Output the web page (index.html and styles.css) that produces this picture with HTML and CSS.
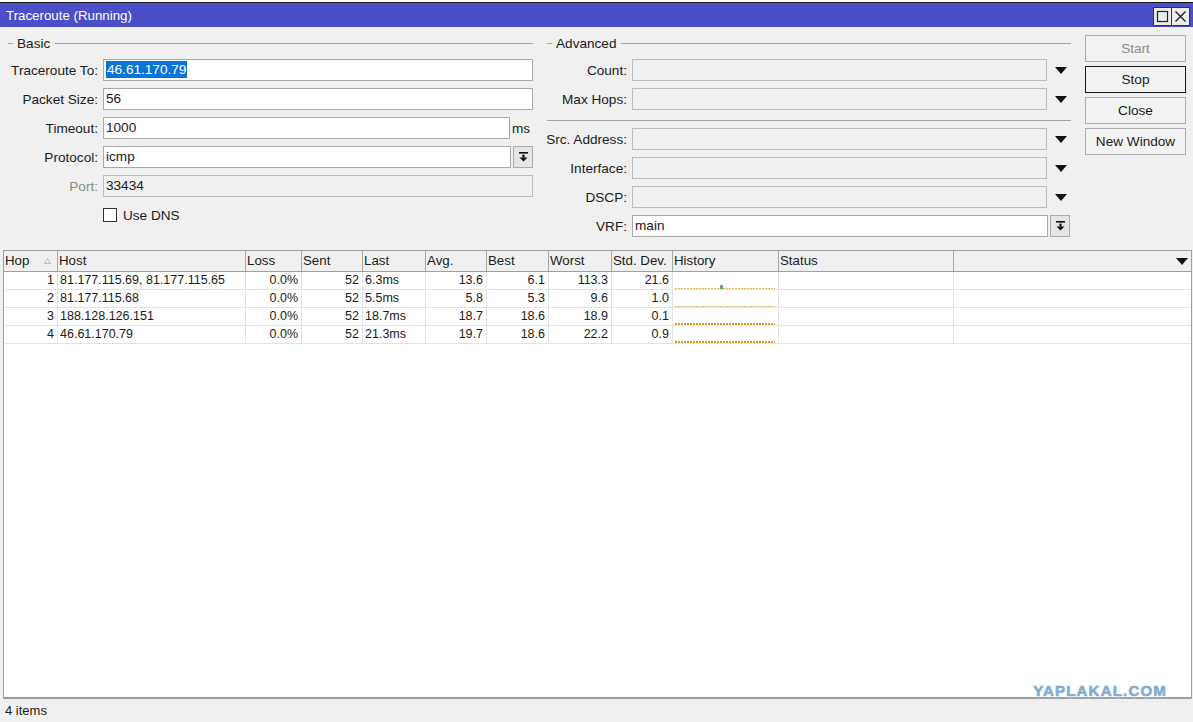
FILE: index.html
```html
<!DOCTYPE html>
<html lang="en">
<head>
  <meta charset="UTF-8" />
  <title>Traceroute (Running)</title>
  <link rel="stylesheet" href="styles.css">
</head>
<body>
  <div class="window">
    <div class="behind"></div>

    <div class="titlebar">
      <span class="title">Traceroute (Running)</span>
      <div class="winbtns">
        <span class="winbtn">
          <svg width="13" height="13" viewBox="0 0 13 13"><rect x="1.5" y="1.5" width="10" height="10" fill="none" stroke="#222" stroke-width="1.2"/></svg>
        </span>
        <span class="winbtn">
          <svg width="13" height="13" viewBox="0 0 13 13"><path d="M1.5 1.5 L11.5 11.5 M11.5 1.5 L1.5 11.5" stroke="#222" stroke-width="1.4"/></svg>
        </span>
      </div>
    </div>

    <div class="form">
      <div class="group basic">
        <div class="legend"><span class="dash"></span><span>Basic</span><span class="line"></span></div>

        <div class="row">
          <label>Traceroute To:</label>
          <div class="cell"><div class="field"><span class="sel">46.61.170.79</span></div></div>
        </div>
        <div class="row">
          <label>Packet Size:</label>
          <div class="cell"><div class="field">56</div></div>
        </div>
        <div class="row">
          <label>Timeout:</label>
          <div class="cell"><div class="field">1000</div><span class="unit">ms</span></div>
        </div>
        <div class="row">
          <label>Protocol:</label>
          <div class="cell">
            <div class="field">icmp</div>
            <span class="pick"><svg width="9" height="10" viewBox="0 0 9 10"><rect x="0" y="0" width="9" height="1.6" fill="#111"/><rect x="3.4" y="2.6" width="2.2" height="3" fill="#111"/><polygon points="0.5,5.4 8.5,5.4 4.5,9.6" fill="#111"/></svg></span>
          </div>
        </div>
        <div class="row">
          <label class="dim">Port:</label>
          <div class="cell"><div class="field off">33434</div></div>
        </div>
        <div class="row">
          <span></span>
          <div class="cell"><span class="checkbox"></span><span class="checklabel">Use DNS</span></div>
        </div>
      </div>

      <div class="group advanced">
        <div class="legend"><span class="dash"></span><span>Advanced</span><span class="line"></span></div>

        <div class="row">
          <label>Count:</label>
          <div class="cell"><div class="field off"></div><span class="combo"><svg width="12" height="7" viewBox="0 0 12 7"><polygon points="0,0 12,0 6,7" fill="#111"/></svg></span></div>
        </div>
        <div class="row">
          <label>Max Hops:</label>
          <div class="cell"><div class="field off"></div><span class="combo"><svg width="12" height="7" viewBox="0 0 12 7"><polygon points="0,0 12,0 6,7" fill="#111"/></svg></span></div>
        </div>

        <div class="sep"></div>

        <div class="row">
          <label>Src. Address:</label>
          <div class="cell"><div class="field off"></div><span class="combo"><svg width="12" height="7" viewBox="0 0 12 7"><polygon points="0,0 12,0 6,7" fill="#111"/></svg></span></div>
        </div>
        <div class="row">
          <label>Interface:</label>
          <div class="cell"><div class="field off"></div><span class="combo"><svg width="12" height="7" viewBox="0 0 12 7"><polygon points="0,0 12,0 6,7" fill="#111"/></svg></span></div>
        </div>
        <div class="row">
          <label>DSCP:</label>
          <div class="cell"><div class="field off"></div><span class="combo"><svg width="12" height="7" viewBox="0 0 12 7"><polygon points="0,0 12,0 6,7" fill="#111"/></svg></span></div>
        </div>
        <div class="row">
          <label>VRF:</label>
          <div class="cell vrf">
            <div class="field">main</div>
            <span class="pick"><svg width="9" height="10" viewBox="0 0 9 10"><rect x="0" y="0" width="9" height="1.6" fill="#111"/><rect x="3.4" y="2.6" width="2.2" height="3" fill="#111"/><polygon points="0.5,5.4 8.5,5.4 4.5,9.6" fill="#111"/></svg></span>
          </div>
        </div>
      </div>

      <div class="buttons">
        <div class="btn off">Start</div>
        <div class="btn default">Stop</div>
        <div class="btn">Close</div>
        <div class="btn">New Window</div>
      </div>
    </div>

    <div class="list">
      <div class="trow thead">
        <div class="hop-h">Hop <svg width="7" height="6" viewBox="0 0 7 6"><polygon points="3.5,0.5 6.5,5.5 0.5,5.5" fill="none" stroke="#b4b4b4" stroke-width="0.9"/></svg></div>
        <div>Host</div>
        <div>Loss</div>
        <div>Sent</div>
        <div>Last</div>
        <div>Avg.</div>
        <div>Best</div>
        <div>Worst</div>
        <div>Std. Dev.</div>
        <div>History</div>
        <div>Status</div>
        <div class="menu"><svg width="12" height="7" viewBox="0 0 12 7"><polygon points="0,0 12,0 6,7" fill="#111"/></svg></div>
      </div>

      <div class="trow">
        <div class="num">1</div><div>81.177.115.69, 81.177.115.65</div><div class="num">0.0%</div><div class="num">52</div><div>6.3ms</div>
        <div class="num">13.6</div><div class="num">6.1</div><div class="num">113.3</div><div class="num">21.6</div>
        <div class="hcell"><span class="hist"><span class="tick"></span></span></div><div></div><div></div>
      </div>
      <div class="trow">
        <div class="num">2</div><div>81.177.115.68</div><div class="num">0.0%</div><div class="num">52</div><div>5.5ms</div>
        <div class="num">5.8</div><div class="num">5.3</div><div class="num">9.6</div><div class="num">1.0</div>
        <div class="hcell"><span class="hist"></span></div><div></div><div></div>
      </div>
      <div class="trow">
        <div class="num">3</div><div>188.128.126.151</div><div class="num">0.0%</div><div class="num">52</div><div>18.7ms</div>
        <div class="num">18.7</div><div class="num">18.6</div><div class="num">18.9</div><div class="num">0.1</div>
        <div class="hcell"><span class="hist strong"></span></div><div></div><div></div>
      </div>
      <div class="trow">
        <div class="num">4</div><div>46.61.170.79</div><div class="num">0.0%</div><div class="num">52</div><div>21.3ms</div>
        <div class="num">19.7</div><div class="num">18.6</div><div class="num">22.2</div><div class="num">0.9</div>
        <div class="hcell"><span class="hist strong"></span></div><div></div><div></div>
      </div>
    </div>

    <div class="statusbar">4 items</div>

    <div class="watermark">YAPLAKAL.COM</div>
  </div>
</body>
</html>
```

FILE: styles.css
```css
body {
  margin: 0;
  background-color: #f0f0f0;
  font-family: "Liberation Sans", Arial, sans-serif;
  color: #1b1b1b;
}

.window {
  position: relative;
  width: 1193px;
  height: 722px;
  display: flex;
  flex-direction: column;
  overflow: hidden;
}

.behind {
  height: 2px;
  background-color: #fff;
  border-bottom: 1px solid #1a1a1a;
}

/* title bar */

.titlebar {
  height: 24px;
  background-color: #4b4fc7;
  display: flex;
  align-items: center;
  justify-content: space-between;
  padding: 0 3px 0 6px;
}

.title {
  color: #fff;
  font-size: 13.3px;
}

.winbtns {
  display: flex;
  margin-top: 3px;
}

.winbtn {
  width: 17px;
  height: 17px;
  border: 1px solid #333;
  background-color: #ececec;
  display: flex;
  align-items: center;
  justify-content: center;
}

.winbtn + .winbtn {
  margin-left: -1px;
}

/* form */

.form {
  height: 223px;
  box-sizing: border-box;
  padding: 8px 7px 0 3px;
  display: flex;
  font-size: 13.6px;
}

.basic {
  width: 530px;
}

.advanced {
  width: 526px;
  margin-left: 12px;
}

.legend {
  height: 16px;
  display: flex;
  align-items: center;
  margin-bottom: 8px;
}

.basic .legend {
  padding-left: 5px;
}

.advanced .legend {
  padding-left: 2px;
}

.legend .dash {
  width: 5px;
  height: 1px;
  background-color: #a5a5a5;
  margin-right: 4px;
}

.legend .line {
  flex: 1;
  height: 1px;
  background-color: #a5a5a5;
  margin-left: 5px;
}

.row {
  display: grid;
  grid-template-columns: 95px 1fr;
  column-gap: 5px;
  height: 22px;
  margin-bottom: 7px;
  align-items: center;
}

.advanced .row {
  grid-template-columns: 82px 1fr;
}

.row label {
  text-align: right;
  white-space: nowrap;
}

.row label.dim {
  color: #8a8a8a;
}

.cell {
  display: flex;
  align-items: center;
  height: 22px;
}

.field {
  flex: 1;
  height: 22px;
  box-sizing: border-box;
  border: 1px solid #a9a9a9;
  background-color: #fff;
  line-height: 20px;
  padding-left: 2px;
  white-space: nowrap;
}

.field.off {
  background-color: #f0f0f0;
  border-color: #bcbcbc;
}

.sel {
  background-color: #0a74d4;
  color: #fff;
  padding: 1px 1px;
}

.unit {
  width: 21px;
  padding-left: 2px;
}

.pick {
  width: 20px;
  height: 22px;
  margin-left: 2px;
  box-sizing: border-box;
  border: 1px solid #adadad;
  background-color: #e6e6e6;
  display: flex;
  align-items: center;
  justify-content: center;
}

.vrf {
  padding-right: 1px;
}

.combo {
  width: 24px;
  padding-left: 4px;
  box-sizing: border-box;
  display: flex;
  justify-content: center;
}

.checkbox {
  width: 14px;
  height: 14px;
  box-sizing: border-box;
  border: 1px solid #333;
  background-color: #fff;
}

.checklabel {
  margin-left: 6px;
}

.sep {
  height: 1px;
  background-color: #a5a5a5;
  margin: 10px 0 7px 2px;
}

.buttons {
  width: 101px;
  margin-left: 14px;
  display: flex;
  flex-direction: column;
  gap: 4px;
}

.btn {
  height: 27px;
  box-sizing: border-box;
  border: 1px solid #adadad;
  background-color: #f2f2f2;
  display: flex;
  align-items: center;
  justify-content: center;
}

.btn.off {
  color: #8c8c8c;
}

.btn.default {
  border-color: #1a1a1a;
}

/* list */

.list {
  flex: 1;
  margin: 0 1px 0 3px;
  border: 1px solid #a0a0a0;
  border-bottom: 2px solid #9c9c9c;
  background-color: #fff;
}

.trow {
  display: grid;
  grid-template-columns: 54px 188px 56px 61px 63px 61px 62px 63px 61px 106px 175px 1fr;
  height: 18px;
  box-sizing: border-box;
  border-bottom: 1px solid #e2e2e2;
  font-size: 12.5px;
  line-height: 17px;
}

.trow > div {
  border-right: 1px solid #e2e2e2;
  padding: 0 3px 0 2px;
  white-space: nowrap;
  overflow: hidden;
}

.trow > div:last-child {
  border-right: none;
}

.trow .num {
  text-align: right;
}

.thead {
  height: 21px;
  background-color: #f0f0f0;
  border-bottom: 1px solid #a0a0a0;
  font-size: 13.3px;
  line-height: 20px;
}

.thead > div {
  border-right-color: #a8a8a8;
  padding-left: 1px;
}

.hop-h {
  display: flex;
  align-items: center;
  justify-content: space-between;
}

.hop-h svg {
  margin-right: 3px;
}

.thead .menu {
  display: flex;
  align-items: center;
  justify-content: flex-end;
  padding-right: 3px;
}

.hcell {
  display: flex;
  align-items: flex-end;
  padding: 0 3px 2px 5px;
}

.hist {
  position: relative;
  display: block;
  width: 100%;
  height: 1px;
  background: repeating-linear-gradient(90deg, #e2b767 0 2px, transparent 2px 3px);
}

.hist.strong {
  height: 2px;
  background: repeating-linear-gradient(90deg, #d99a22 0 2px, transparent 2px 3px);
}

.tick {
  position: absolute;
  left: 45px;
  bottom: 0;
  width: 3px;
  height: 4px;
  background-color: #6aa664;
}

.statusbar {
  height: 23px;
  line-height: 23px;
  padding-left: 5px;
  font-size: 13px;
}

.watermark {
  position: absolute;
  right: 26px;
  bottom: 23px;
  font-size: 15px;
  font-weight: bold;
  letter-spacing: 1.2px;
  color: #82aed0;
  -webkit-text-stroke: 0.7px #82aed0;
  text-shadow: 0 0 2px #fff, 0 0 4px #fff;
}
```
